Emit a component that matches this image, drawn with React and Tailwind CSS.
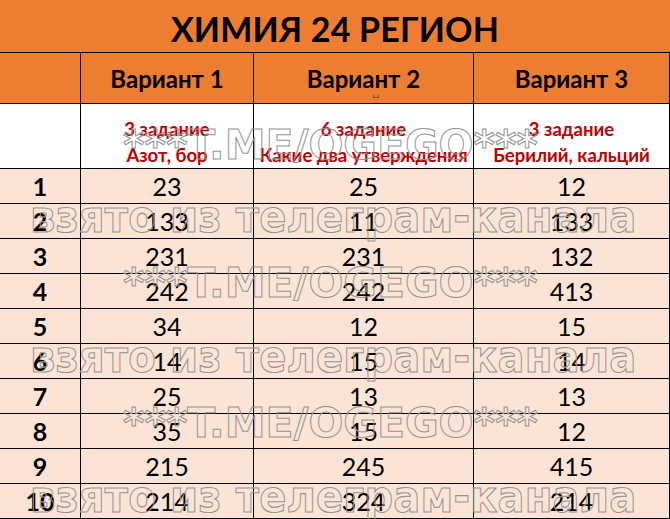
import React from "react";

const rows = [
  ["1", "23", "25", "12"],
  ["2", "133", "11", "133"],
  ["3", "231", "231", "132"],
  ["4", "242", "242", "413"],
  ["5", "34", "12", "15"],
  ["6", "14", "15", "14"],
  ["7", "25", "13", "13"],
  ["8", "35", "15", "12"],
  ["9", "215", "245", "415"],
  ["10", "214", "324", "214"],
];

const subs = [
  ["3 задание", "Азот, бор"],
  ["6 задание", "Какие два утверждения"],
  ["3 задание", "Берилий, кальций"],
];

const wmA = [125, 263, 403];
const wmB = [194, 334, 474];

export default function App() {
  return (
    <div className="relative w-[670px] h-[519px] overflow-hidden bg-white font-['Lato','Liberation_Sans',sans-serif] text-black">
      <div className="h-[53px] bg-[#ED7D31] border-b border-black flex items-center justify-center pt-[5px]">
        <span className="text-[34px] font-bold leading-none tracking-[0.2px]">ХИМИЯ 24 РЕГИОН</span>
      </div>
      <div className="grid grid-cols-[81px_173px_220px_196px]">
        <div className="h-[51px] bg-[#ED7D31] border-r border-b border-black" />
        {["Вариант 1", "Вариант 2", "Вариант 3"].map((t, i) => (
          <div
            key={t}
            className="relative h-[51px] bg-[#ED7D31] border-r border-b border-black flex items-center justify-center pt-[2px]"
          >
            <span className="text-[24px] font-bold leading-none">{t}</span>
            {i === 1 && (
              <span className="absolute left-[119px] top-[42px] w-[6px] h-[3px] border-l border-r border-b border-[#555]" />
            )}
          </div>
        ))}
        <div className="h-[65px] bg-white border-r border-b border-black" />
        {subs.map((s, i) => (
          <div
            key={i}
            className="h-[65px] bg-white border-r border-b border-black flex flex-col items-center justify-end pb-[0px] text-[#C00000] font-bold text-[18.5px] leading-[26px] whitespace-nowrap"
          >
            <span>{s[0]}</span>
            <span>{s[1]}</span>
          </div>
        ))}
        {rows.map((r) =>
          r.map((c, j) => (
            <div
              key={r[0] + "-" + j}
              className={
                "h-[35px] bg-[#FBE4D5] border-r border-b border-black flex items-center justify-center leading-none " +
                (j === 0 ? "text-[25px] font-bold" : "text-[25px]")
              }
            >
              {c}
            </div>
          ))
        )}
      </div>
      <div className="absolute inset-0 pointer-events-none font-['DejaVu_Sans',sans-serif] font-bold text-transparent [-webkit-text-stroke:1px_#959595]">
        {wmA.map((t) => (
          <span
            key={"a" + t}
            className="absolute left-[123px] text-[41px] leading-none whitespace-nowrap"
            style={{ top: t }}
          >
            ***T.ME/OGEGO***
          </span>
        ))}
        {wmB.map((t) => (
          <span
            key={"b" + t}
            className="absolute left-[30px] text-[40px] leading-none whitespace-nowrap origin-top scale-y-[1.12] tracking-[0.2px]"
            style={{ top: t }}
          >
            взято из телеграм-канала
          </span>
        ))}
      </div>
    </div>
  );
}
